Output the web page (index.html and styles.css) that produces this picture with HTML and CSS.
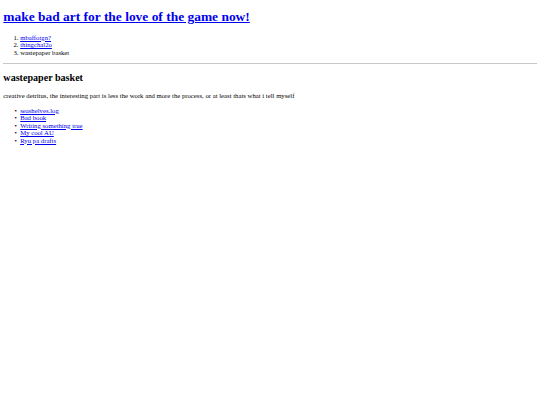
FILE: index.html
```html
<!DOCTYPE html>
<html>
<head>
<meta charset="utf-8">
<title>wastepaper basket</title>
<link rel="stylesheet" href="styles.css">
</head>
<body class="page">
<h1 class="site-title"><a href="#" class="link">make bad art for the love of the game now!</a></h1>
<ol class="crumbs">
<li><a href="#" class="link">mbaffotgn?</a></li>
<li><a href="#" class="link">thingchal2o</a></li>
<li>wastepaper basket</li>
</ol>
<hr class="rule">
<h2 class="section-title">wastepaper basket</h2>
<p class="desc">creative detritus, the interesting part is less the work and more the process, or at least thats what i tell myself</p>
<ul class="items">
<li><a href="#" class="link">seashelves.log</a></li>
<li><a href="#" class="link">Bad book</a></li>
<li><a href="#" class="link">Writing something true</a></li>
<li><a href="#" class="link">My cool AU</a></li>
<li><a href="#" class="link">Ryu pa drafts</a></li>
</ul>
</body>
</html>
```
FILE: styles.css
```css
html { background: #fff; }
.page {
  margin: 3.36px;
  font-family: "Liberation Serif", "Times New Roman", serif;
  font-size: 6.72px;
  line-height: 7.5px;
  color: #000;
}
.link { color: #0000ee; text-decoration: underline; }
.site-title {
  font-size: 13.44px;
  line-height: 15.45px;
  font-weight: bold;
  margin: 6px 0 9px;
}
.crumbs {
  margin: 6.72px 0;
  padding-left: 16.8px;
}
.rule {
  margin: 6.72px 0 3.36px;
  border: 0;
  border-top: 1px solid #c8c8c8;
  height: 0;
}
.section-title {
  font-size: 10.08px;
  line-height: 11.6px;
  font-weight: bold;
  margin: 8.37px 0;
}
.desc { margin: 6.72px 0; }
.items {
  margin: 6.72px 0;
  padding-left: 16.8px;
  list-style: disc;
}
.items li::marker {
  content: "\2022\00a0\00a0";
}
```
